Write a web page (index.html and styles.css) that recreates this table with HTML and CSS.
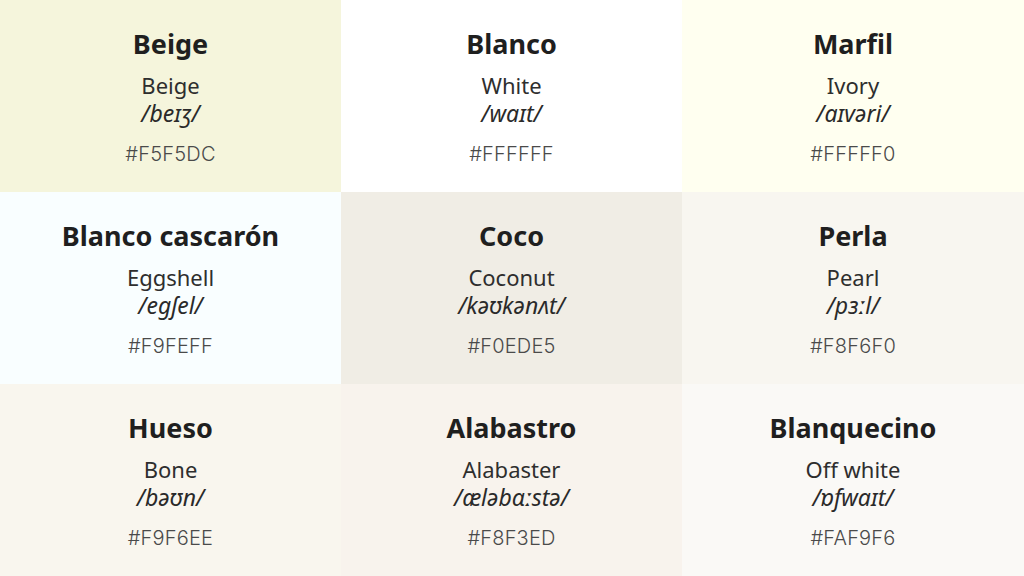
FILE: index.html
```html
<!DOCTYPE html>
<html lang="es">
<head>
<meta charset="utf-8">
<title>Colores blancos</title>
<link rel="stylesheet" href="styles.css">
</head>
<body>
<main class="grid">
  <section class="cell c-beige">
    <h2 class="title">Beige</h2>
    <p class="en">Beige</p>
    <p class="ipa">/beɪʒ/</p>
    <p class="hex">#F5F5DC</p>
  </section>
  <section class="cell c-blanco">
    <h2 class="title">Blanco</h2>
    <p class="en">White</p>
    <p class="ipa">/waɪt/</p>
    <p class="hex">#FFFFFF</p>
  </section>
  <section class="cell c-marfil">
    <h2 class="title">Marfil</h2>
    <p class="en">Ivory</p>
    <p class="ipa">/aɪvəri/</p>
    <p class="hex">#FFFFF0</p>
  </section>
  <section class="cell c-cascaron">
    <h2 class="title">Blanco cascarón</h2>
    <p class="en">Eggshell</p>
    <p class="ipa">/egʃel/</p>
    <p class="hex">#F9FEFF</p>
  </section>
  <section class="cell c-coco">
    <h2 class="title">Coco</h2>
    <p class="en">Coconut</p>
    <p class="ipa">/kəʊkənʌt/</p>
    <p class="hex">#F0EDE5</p>
  </section>
  <section class="cell c-perla">
    <h2 class="title">Perla</h2>
    <p class="en">Pearl</p>
    <p class="ipa">/pɜːl/</p>
    <p class="hex">#F8F6F0</p>
  </section>
  <section class="cell c-hueso">
    <h2 class="title">Hueso</h2>
    <p class="en">Bone</p>
    <p class="ipa">/bəʊn/</p>
    <p class="hex">#F9F6EE</p>
  </section>
  <section class="cell c-alabastro">
    <h2 class="title">Alabastro</h2>
    <p class="en">Alabaster</p>
    <p class="ipa">/æləbɑːstə/</p>
    <p class="hex">#F8F3ED</p>
  </section>
  <section class="cell c-blanquecino">
    <h2 class="title">Blanquecino</h2>
    <p class="en">Off white</p>
    <p class="ipa">/ɒfwaɪt/</p>
    <p class="hex">#FAF9F6</p>
  </section>
</main>
</body>
</html>
```
FILE: styles.css
```css
html, body {
  margin: 0;
  padding: 0;
}
body {
  width: 1024px;
  height: 576px;
  overflow: hidden;
  font-family: "Noto Sans", "Open Sans", sans-serif;
  color: #222;
}
.grid {
  display: grid;
  grid-template-columns: 341px 341px 342px;
  grid-template-rows: 192px 192px 192px;
}
.cell {
  display: flex;
  flex-direction: column;
  align-items: center;
  padding-top: 28px;
  box-sizing: border-box;
}
.title {
  margin: 0;
  font-size: 27px;
  line-height: 32px;
  font-weight: 700;
  color: #1f1f1f;
}
.en {
  margin: 11px 0 0;
  font-size: 22px;
  line-height: 28px;
  color: #2e2e2e;
}
.ipa {
  margin: 0;
  font-size: 23px;
  line-height: 28px;
  font-style: italic;
  color: #2a2a2a;
}
.hex {
  margin: 13px 0 0;
  font-family: "Inter", "Noto Sans", sans-serif;
  font-size: 20px;
  font-weight: 300;
  letter-spacing: 0.2px;
  line-height: 28px;
  color: #4a4a4a;
}
.c-beige { background: #F5F5DC; }
.c-blanco { background: #FFFFFF; }
.c-marfil { background: #FFFFF0; }
.c-cascaron { background: #F9FEFF; }
.c-coco { background: #F0EDE5; }
.c-perla { background: #F8F6F0; }
.c-hueso { background: #F9F6EE; }
.c-alabastro { background: #F8F3ED; }
.c-blanquecino { background: #FAF9F6; }
```
